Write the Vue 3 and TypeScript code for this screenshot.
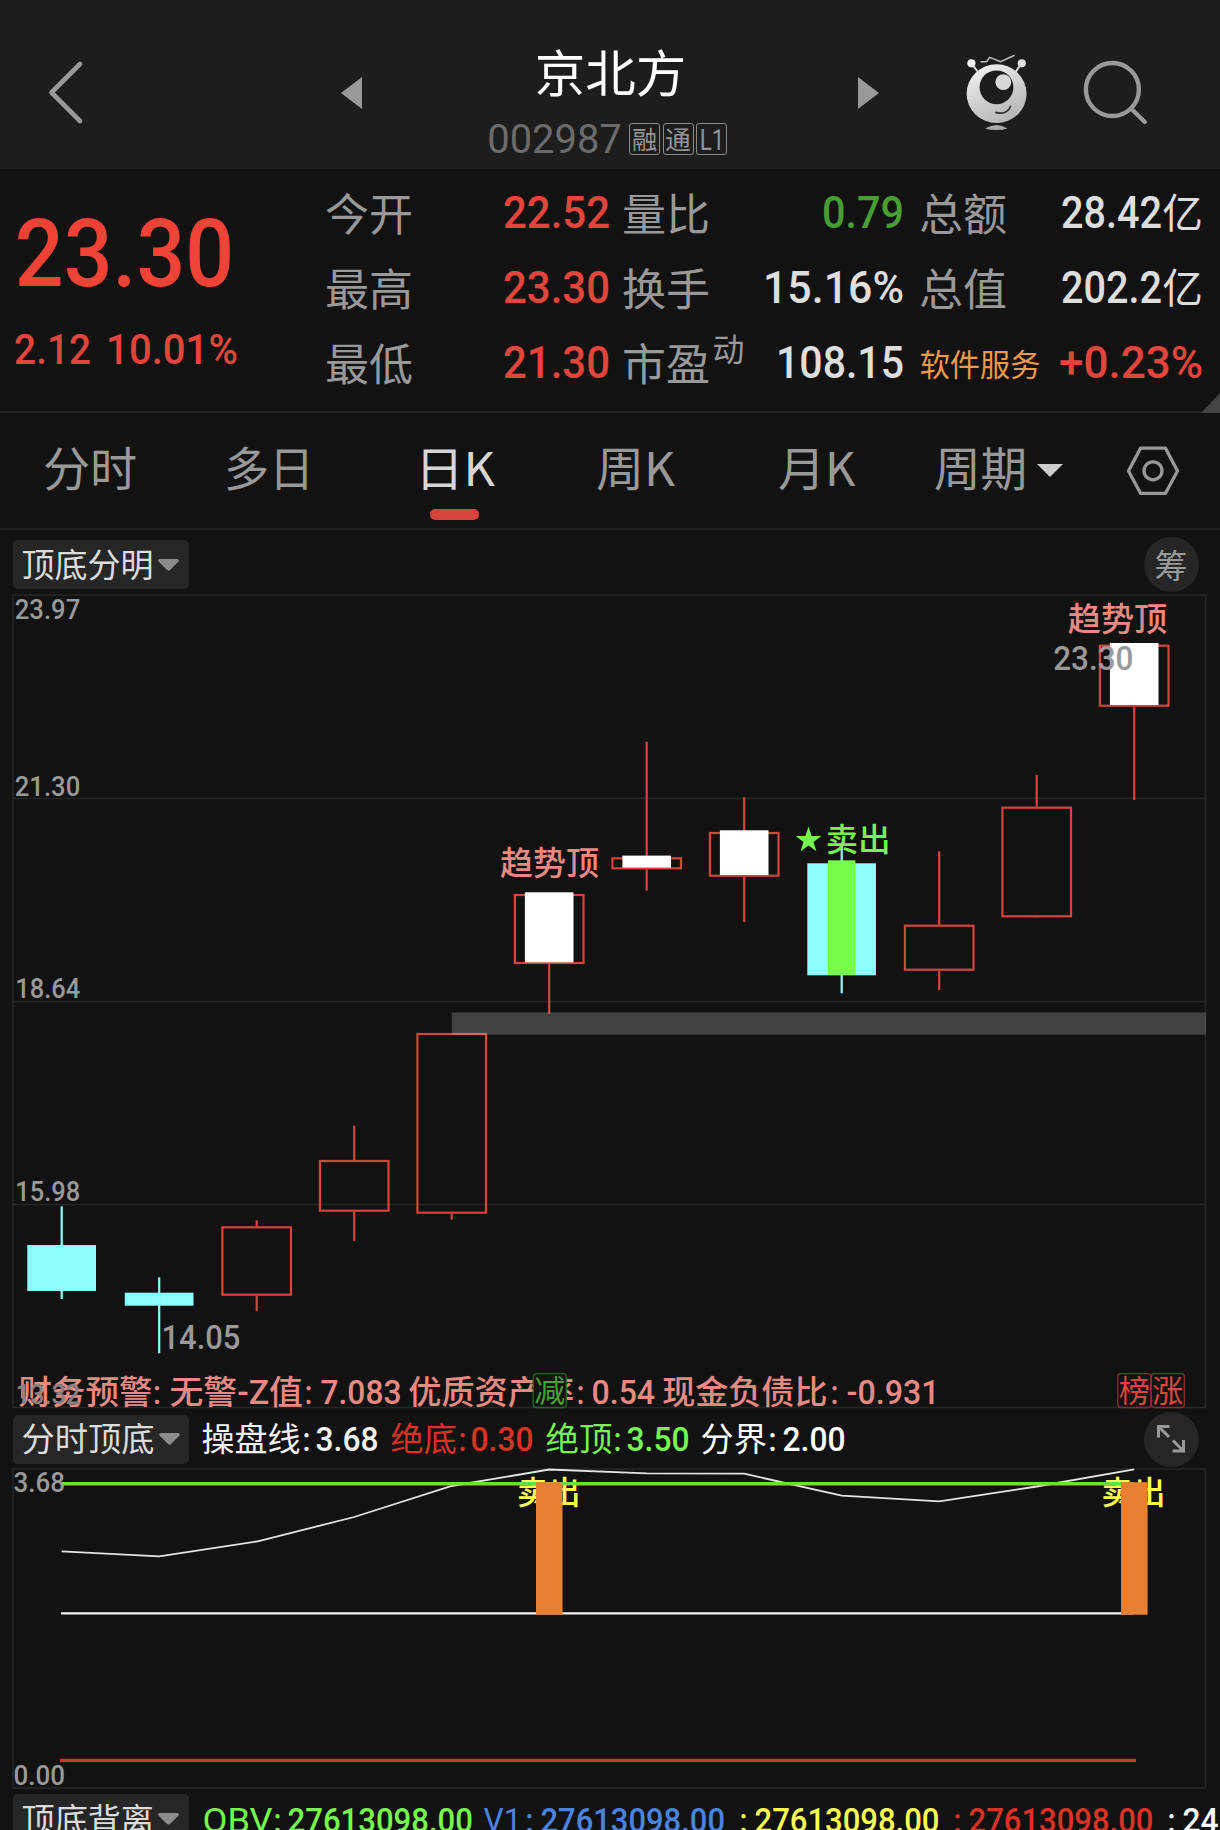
<script setup lang="ts">
import { h } from 'vue'

/* A single line of text fitted to a given ink width; its box is exactly the cap height. */
interface FitProps { t: string; w: number; s: number; dy?: number }
const Fit = (p: FitProps) => {
  const cap = Math.round(p.s * 0.711 * 10) / 10
  const pad = p.s * 0.045
  return h('svg', { class: 'fit', width: p.w, height: cap }, [
    h('text', {
      x: -pad, y: cap + (p.dy ?? 0), 'font-size': p.s,
      textLength: p.w + pad * 2, lengthAdjust: 'spacingAndGlyphs',
    }, p.t),
  ])
}
Fit.props = ['t', 'w', 's', 'dy']

interface Piece { t: string; w: number; c?: string; s?: number; dy?: number; k?: string }
interface Stat { label: Piece; sup?: boolean; value: Piece[] }
const lab = (t: string): Piece => ({ t, w: 84, s: 44, dy: 3 })
const num = (t: string, w: number, c: string): Piece => ({ t, w, c, s: 45 })
const yi: Piece = { t: '亿', w: 37, c: 'light', s: 41, dy: 0, k: 'cjk' }
const stats: Stat[] = [
  { label: lab('今开'), value: [num('22.52', 103, 'red')] },
  { label: lab('量比'), value: [num('0.79', 78, 'green')] },
  { label: lab('总额'), value: [num('28.42', 97, 'light'), yi] },
  { label: lab('最高'), value: [num('23.30', 103, 'red')] },
  { label: lab('换手'), value: [num('15.16%', 137, 'light')] },
  { label: lab('总值'), value: [num('202.2', 97, 'light'), yi] },
  { label: lab('最低'), value: [num('21.30', 103, 'red')] },
  { label: lab('市盈'), sup: true, value: [num('108.15', 124, 'light')] },
  { label: { t: '软件服务', w: 118, s: 30.5, dy: -2, c: 'orange' }, value: [num('+0.23%', 140, 'red')] },
]

const tabs = [
  { t: '分时', w: 90, gap: 45, on: false },
  { t: '多日', w: 86, gap: 90.5, on: false },
  { t: '日K', w: 76, gap: 105, on: true },
  { t: '周K', w: 75, gap: 105, on: false },
  { t: '月K', w: 73.4, gap: 107.6, on: false },
  { t: '周期', w: 89, gap: 82.5, on: false },
]

interface Leg { t: string; w: number; gap: number; c: string; k?: string }
const legend1: Leg[] = [
  { t: '操盘线', w: 96, gap: 14.5, c: '#f2f2f2', k: 'cjk' }, { t: ':', w: 5, gap: 5, c: '#f2f2f2' }, { t: '3.68', w: 60, gap: 7.5, c: '#f2f2f2' },
  { t: '绝底', w: 63.5, gap: 15, c: '#d93326', k: 'cjk' }, { t: ':', w: 5, gap: 5, c: '#d93326' }, { t: '0.30', w: 60, gap: 7, c: '#d93326' },
  { t: '绝顶', w: 64, gap: 14.5, c: '#76f84e', k: 'cjk' }, { t: ':', w: 5, gap: 4.5, c: '#76f84e' }, { t: '3.50', w: 60, gap: 8, c: '#76f84e' },
  { t: '分界', w: 63.5, gap: 14, c: '#fff', k: 'cjk' }, { t: ':', w: 5, gap: 4.5, c: '#fff' }, { t: '2.00', w: 60, gap: 9, c: '#fff' },
]
const legend2: Leg[] = [
  { t: 'OBV', w: 67, gap: 15, c: '#76f84e', k: 'thin' }, { t: ':', w: 5, gap: 4.5, c: '#76f84e' }, { t: '27613098.00', w: 182.5, gap: 8.5, c: '#76f84e' },
  { t: 'V1', w: 35, gap: 14, c: '#4a84e0', k: 'thin' }, { t: ':', w: 5, gap: 7, c: '#4a84e0' }, { t: '27613098.00', w: 181.5, gap: 10, c: '#4a84e0' },
  { t: ':', w: 5, gap: 17.5, c: '#fcfc55' }, { t: '27613098.00', w: 182, gap: 9.5, c: '#fcfc55' },
  { t: ':', w: 5, gap: 17.5, c: '#d93326' }, { t: '27613098.00', w: 182, gap: 9.5, c: '#d93326' },
  { t: ':', w: 5, gap: 17, c: '#fff' }, { t: '24', w: 33, gap: 10, c: '#fff' },
]

/* Candles in page pixels: body top/bottom, wick top/bottom */
type Kind = 'up' | 'mark' | 'down' | 'sell'
const candles: { k: Kind; o: number; c: number; hi: number; lo: number }[] = [
  { k: 'down', o: 1245, c: 1291, hi: 1206.3, lo: 1299 },
  { k: 'down', o: 1292.7, c: 1305.7, hi: 1277.3, lo: 1353.3 },
  { k: 'up', o: 1226.3, c: 1295.7, hi: 1220.3, lo: 1311.3 },
  { k: 'up', o: 1160, c: 1211.7, hi: 1125.7, lo: 1241 },
  { k: 'up', o: 1033, c: 1213.7, hi: 1033, lo: 1219.7 },
  { k: 'mark', o: 894, c: 964, hi: 894, lo: 1013.7 },
  { k: 'mark', o: 857.3, c: 869.3, hi: 741.7, lo: 890.7 },
  { k: 'mark', o: 832, c: 876.7, hi: 797.3, lo: 922 },
  { k: 'sell', o: 863.3, c: 975.3, hi: 842.7, lo: 993.3 },
  { k: 'up', o: 924.7, c: 970.7, hi: 851.3, lo: 990 },
  { k: 'up', o: 806.7, c: 917.3, hi: 775, lo: 917 },
  { k: 'mark', o: 644.7, c: 706.7, hi: 645, lo: 800 },
]
const cx = (i: number) => 61.7 + 97.5 * i

interface Txt { t: string; x: number; e: number; y: number; s: number; c: string }
const P = '#e98984'
const G = '#999'
const axis: Txt[] = [
  { t: '23.97', x: 16, e: 79, y: 618.5, s: 27.5, c: G },
  { t: '21.30', x: 16, e: 79, y: 795.5, s: 27.5, c: G },
  { t: '18.64', x: 16.5, e: 79, y: 998.3, s: 27.5, c: G },
  { t: '15.98', x: 16.5, e: 79, y: 1201, s: 27.5, c: G },
]
const warn: Txt[] = [
  { t: '财务预警', x: 20, e: 151, y: 1404, s: 33, c: P }, { t: ':', x: 154.5, e: 159.5, y: 1404, s: 33, c: P },
  { t: '无警-Z值', x: 171, e: 301.5, y: 1404, s: 33, c: P }, { t: ':', x: 306, e: 311, y: 1404, s: 33, c: P },
  { t: '7.083', x: 322, e: 400, y: 1404.3, s: 33, c: P },
  { t: '优质资产率', x: 409.7, e: 572.6, y: 1404, s: 33, c: P }, { t: ':', x: 578, e: 583, y: 1404, s: 33, c: P },
  { t: '0.54', x: 593, e: 653.6, y: 1404.3, s: 33, c: P },
  { t: '现金负债比', x: 663.7, e: 826, y: 1404, s: 33, c: P }, { t: ':', x: 832, e: 837, y: 1404, s: 33, c: P },
  { t: '-0.931', x: 848, e: 938, y: 1404.3, s: 33, c: P },
]
const notes: Txt[] = [
  { t: '13.32', x: 17, e: 79, y: 1404, s: 27.5, c: '#8d8080' },
  { t: '14.05', x: 163, e: 239, y: 1349, s: 33, c: G },
  { t: '23.30', x: 1054.7, e: 1132, y: 670, s: 33, c: G },
  { t: '趋势顶', x: 501.4, e: 597.5, y: 875, s: 32.5, c: P },
  { t: '趋势顶', x: 1069.3, e: 1165.8, y: 631, s: 32.5, c: P },
  { t: '卖出', x: 827.3, e: 889, y: 851, s: 32, c: '#76f84e' },
]
const line = [1551.3, 1556.3, 1541.5, 1517, 1486, 1469.5, 1473.3, 1473.7, 1495.7, 1501.3, 1486.5, 1469.3]
const points = line.map((y, i) => `${cx(i)},${y}`).join(' ')
const tx = (t: Txt) => t.x - t.s * 0.045
const tl = (t: Txt) => t.e - t.x + t.s * 0.09
</script>

<template>
  <main class="app">
    <header class="top">
      <svg class="back" width="40" height="70" viewBox="46 58 40 70"><path d="M80 64 51.500 92.500 80 121" /></svg>
      <svg class="prev" width="22" height="34" viewBox="0 0 22 34"><path d="M0 16 21 0V32Z" /></svg>
      <div class="title">
        <Fit t="京北方" :w="147" :s="50" class="name" />
        <div class="sub">
          <Fit t="002987" :w="131" :s="40" class="code" />
          <span class="badge"><Fit t="融" :w="23" :s="25" :dy="1.500" /></span>
          <span class="badge"><Fit t="通" :w="23.500" :s="25" :dy="1.500" /></span>
          <span class="badge"><Fit t="L1" :w="22" :s="30" :dy="0.500" class="thin" /></span>
        </div>
      </div>
      <svg class="next" width="22" height="34" viewBox="0 0 22 34"><path d="M21 16 0 0V32Z" /></svg>
      <svg class="robot" width="74" height="84" viewBox="960 50 74 84">
        <defs>
          <linearGradient id="skin" x1="0.2" y1="0" x2="0.7" y2="1">
            <stop offset="0" stop-color="#f2f2f2" /><stop offset="0.6" stop-color="#cacaca" /><stop offset="1" stop-color="#b5b5b5" />
          </linearGradient>
        </defs>
        <path d="M971.500 63.500 978 72M1021.600 63.500 1015.500 72" stroke="#e0e0e0" stroke-width="2" />
        <path d="M980.400 61.800H986.500L989.700 57.300 1000.600 61.700 1014.600 55.300" fill="none" stroke="#bbb" stroke-width="1.500" />
        <circle cx="971.400" cy="63.300" r="4.100" fill="#f4f4f4" />
        <circle cx="1021.800" cy="63.300" r="4.100" fill="#ddd" />
        <ellipse cx="996.600" cy="93.700" rx="30" ry="29.400" fill="url(#skin)" />
        <circle cx="996.500" cy="87.300" r="16.900" fill="#1d1d1d" />
        <circle cx="1003.300" cy="82.200" r="7.900" fill="#d8d8d8" />
        <path d="M996 112.500Q1007 115 1010.500 106.500" fill="none" stroke="#333" stroke-width="1.800" stroke-linecap="round" />
        <path d="M985 128.500Q996.500 121.500 1007.500 128.500 996.500 131.500 985 128.500Z" fill="#aaa" />
      </svg>
      <svg class="search" width="70" height="70" viewBox="1080 58 70 70">
        <circle cx="1112.400" cy="89.500" r="26.500" /><path d="M1131.500 109 1144.800 122" />
      </svg>
    </header>

    <section class="quote">
      <div class="price">
        <Fit t="23.30" :w="211" :s="94" class="last" />
        <div class="chg"><Fit t="2.12" :w="73" :s="42" /><Fit t="10.01%" :w="128" :s="42" /></div>
      </div>
      <div class="grid">
        <div v-for="s in stats" :key="s.label.t" class="stat">
          <div class="label" :class="s.label.c">
            <Fit :t="s.label.t" :w="s.label.w" :s="s.label.s" :dy="s.label.dy" />
            <Fit v-if="s.sup" t="动" :w="29" :s="32" class="sup" />
          </div>
          <div class="value">
            <Fit v-for="v in s.value" :key="v.t" :t="v.t" :w="v.w" :s="v.s" :dy="v.dy" :class="[v.c, v.k]" />
          </div>
        </div>
      </div>
      <svg class="corner" width="19" height="20" viewBox="0 0 19 20"><path d="M19 0V20H0Z" /></svg>
    </section>

    <nav class="tabs">
      <div v-for="t in tabs" :key="t.t" class="tab" :class="{ on: t.on }" :style="{ marginLeft: t.gap + 'px' }">
        <Fit :t="t.t" :w="t.w" :s="47" />
      </div>
      <svg class="caret" width="26" height="13" viewBox="0 0 26 13"><path d="M0 0H26L13 13Z" /></svg>
      <svg class="hex" width="54" height="50" viewBox="0 0 54 50">
        <path d="M14.500 2.200H39.500L51.500 25 39.500 47.300H14.500L2.500 25Z" /><circle cx="27" cy="24.800" r="9" />
      </svg>
    </nav>

    <div class="bar first">
      <button class="pill"><Fit t="顶底分明" :w="129" :s="33" :dy="0.500" /><svg width="21" height="12" viewBox="0 0 21 12"><path d="M1.500 0H19.500Q22 1 20 3L12 11Q10.500 12.500 9 11L1 3Q-1 1 1.500 0Z" /></svg></button>
      <span class="round"><Fit t="筹" :w="30" :s="33" :dy="1" /></span>
    </div>

    <svg class="plot" width="1220" height="816" viewBox="0 594 1220 816">
      <g class="frame">
        <rect x="13" y="595" width="1192.500" height="812.500" />
        <path d="M13 798.500H1205.500M13 1001.500H1205.500M13 1204.500H1205.500" />
      </g>
      <text v-for="t in axis" :key="t.t" :x="tx(t)" :y="t.y" :font-size="t.s" :fill="t.c" :textLength="tl(t)" lengthAdjust="spacingAndGlyphs">{{ t.t }}</text>
      <g v-for="(k, i) in candles" :key="i" :class="k.k">
        <template v-if="k.k === 'down' || k.k === 'sell'">
          <path class="wick" :d="`M${cx(i)} ${k.hi}V${k.lo}`" />
          <rect class="body" :x="cx(i) - 34.400" :y="k.o" width="68.700" :height="k.c - k.o" />
          <rect v-if="k.k === 'sell'" class="core" :x="cx(i) - 13.700" :y="k.o - 3" width="27.400" :height="k.c - k.o + 2.500" />
        </template>
        <template v-else>
          <path class="wick" :d="`M${cx(i)} ${k.hi}V${k.o}M${cx(i)} ${k.c}V${k.lo}`" />
          <rect class="body" :x="cx(i) - 34.300" :y="k.o + 1" width="68.600" :height="k.c - k.o - 2" />
          <rect v-if="k.k === 'mark'" class="core" :x="cx(i) - 24.300" :y="k.o - 1.700" width="48.600" :height="k.c - k.o" />
        </template>
      </g>
      <rect x="451.800" y="1012.300" width="754" height="22.400" fill="#fff" fill-opacity="0.200" />
      <path fill="#76f84e" d="M808.500 826.500 811.600 836H821.300L813.500 842 816.400 851.300 808.500 845.600 800.600 851.300 803.500 842 795.700 836H805.400Z" />
      <text v-for="t in warn" :key="t.x" :x="tx(t)" :y="t.y" :font-size="t.s" :fill="t.c" :textLength="tl(t)" lengthAdjust="spacingAndGlyphs">{{ t.t }}</text>
      <text v-for="t in notes" :key="t.x" :x="tx(t)" :y="t.y" :font-size="t.s" :fill="t.c" :textLength="tl(t)" lengthAdjust="spacingAndGlyphs">{{ t.t }}</text>
      <g class="tag">
        <rect x="533.200" y="1373.700" width="33" height="33.800" rx="3" stroke="#23661c" />
        <text x="534.300" y="1401.500" fill="#46a032">减</text>
        <rect x="1117.800" y="1373.700" width="33" height="33.800" rx="3" stroke="#87302b" />
        <text x="1118.800" y="1401.500" fill="#dc463c">榜</text>
        <rect x="1151.300" y="1373.700" width="33" height="33.800" rx="3" stroke="#87302b" />
        <text x="1152.300" y="1401.500" fill="#dc463c">涨</text>
      </g>
    </svg>

    <div class="bar">
      <button class="pill"><Fit t="分时顶底" :w="130" :s="33" :dy="0.500" /><svg width="21" height="12" viewBox="0 0 21 12"><path d="M1.500 0H19.500Q22 1 20 3L12 11Q10.500 12.500 9 11L1 3Q-1 1 1.500 0Z" /></svg></button>
      <Fit v-for="(l, i) in legend1" :key="i" :t="l.t" :w="l.w" :s="33" :dy="0" :class="l.k" :style="{ marginLeft: l.gap + 'px', fill: l.c }" />
      <span class="round">
        <svg class="expand" width="28" height="28" viewBox="0 0 28 28"><path d="M12.500 1.500H1.500V12.500M1.500 1.500 12 12M15.500 26H26.500V15M26.500 26 16 15.500" /></svg>
      </span>
    </div>

    <svg class="plot" width="1220" height="322" viewBox="0 1468 1220 322">
      <g class="frame"><rect x="13" y="1469" width="1192.500" height="319" /></g>
      <text x="13.500" y="1492.300" font-size="27.500" :fill="G" textLength="51.500" lengthAdjust="spacingAndGlyphs">3.68</text>
      <text x="13.500" y="1784.500" font-size="27.500" :fill="G" textLength="51.500" lengthAdjust="spacingAndGlyphs">0.00</text>
      <g fill="#fcfc55" font-size="32">
        <text x="517" y="1504" textLength="63.500" lengthAdjust="spacingAndGlyphs">卖出</text>
        <text x="1101.500" y="1504" textLength="64" lengthAdjust="spacingAndGlyphs">卖出</text>
      </g>
      <polyline :points="points" fill="none" stroke="#e4e4e4" stroke-width="1.800" />
      <path d="M61 1613.300H1134" stroke="#f4f4f4" stroke-width="2.200" />
      <path d="M62 1483.700H1134" stroke="#69df45" stroke-width="3.400" />
      <path d="M60 1760.300H1136" stroke="#cf3428" stroke-width="3.300" />
      <path d="M536 1482.300H562.500V1614.700H536ZM1121 1482.300H1147.600V1614.700H1121Z" fill="#e97f30" />
    </svg>

    <div class="bar last-bar">
      <button class="pill"><Fit t="顶底背离" :w="129.500" :s="33" :dy="1" /><svg width="21" height="12" viewBox="0 0 21 12"><path d="M1.500 0H19.500Q22 1 20 3L12 11Q10.500 12.500 9 11L1 3Q-1 1 1.500 0Z" /></svg></button>
      <Fit v-for="(l, i) in legend2" :key="i" :t="l.t" :w="l.w" :s="33" :dy="1" :class="l.k" :style="{ marginLeft: l.gap + 'px', fill: l.c }" />
    </div>
  </main>
</template>

<style>
body { margin: 0; background: #121212; }
</style>

<style scoped>
.app {
  width: 1220px;
  height: 1830px;
  overflow: hidden;
  background: #121212;
  font-family: Roboto, "Noto Sans CJK SC", sans-serif;
  font-weight: 500;
}
svg { display: block; flex: none; }
.fit { overflow: visible; fill: currentColor; white-space: pre; }

.top { display: flex; align-items: flex-start; height: 169px; background: #1d1d1d; }
.back { margin: 58px 0 0 46px; fill: none; stroke: #999; stroke-width: 4.600; stroke-linecap: round; stroke-linejoin: round; }
.prev, .next { margin-top: 77px; fill: #999; }
.prev { margin-left: 255px; }
.next { margin-left: 130px; }
.title { display: flex; flex-direction: column; width: 239px; margin: 55.500px 0 0 126px; }
.name { align-self: center; color: #fff; margin-left: 3px; font-weight: 400; }
.sub { display: flex; align-items: flex-start; margin-top: 32px; gap: 2.500px; }
.code { margin: 1.500px 6.500px 0 0; color: #6b6b6b; font-weight: 400; }
.badge {
  display: flex; align-items: center; justify-content: center; box-sizing: border-box;
  width: 31px; height: 32px; flex: none; border: 1px solid #8a8a8a; border-radius: 3px; color: #959595; font-weight: 400;
}
.robot { margin: 50px 0 0 79.500px; }
.search { margin: 58px 0 0 46px; fill: none; stroke: #999; stroke-width: 4.400; stroke-linecap: round; }

.quote { position: relative; display: flex; box-sizing: border-box; height: 244px; border-bottom: 2px solid #232323; }
.price { width: 327px; flex: none; color: #ee4336; }
.last { margin: 49.500px 0 0 19px; }
.chg { display: flex; gap: 19px; margin: 49px 0 0 15.500px; color: #e2453b; }
.grid { display: grid; grid-template-columns: 280.500px 294.500px 298.500px; grid-template-rows: 59px 75px 75px; }
.stat { display: flex; justify-content: space-between; align-items: flex-end; }
.stat:nth-child(3n+2) { padding-left: 16.500px; }
.stat:nth-child(3n) { padding-left: 18.500px; }
.label { display: flex; align-items: flex-end; color: #999; font-weight: 400; }
.sup { margin: 0 0 17px 6px; }
.value { display: flex; align-items: flex-end; gap: 3.500px; }
.red { color: #e2453b; }
.green { color: #479f33; }
.light { color: #dedede; }
.orange { color: #ef9a45; }
.cjk { font-weight: 400; }
.corner { position: absolute; right: 0; bottom: -2px; fill: #444; }

.tabs { display: flex; align-items: flex-start; box-sizing: border-box; height: 117px; border-bottom: 2px solid #202020; color: #999; }
.tab { position: relative; padding-top: 40px; font-family: "Noto Sans CJK SC", sans-serif; font-weight: 400; }
.on { color: #d6d6d6; }
.on::after { content: ""; position: absolute; top: 96px; left: 13px; width: 49px; height: 11px; border-radius: 5px; background: #d6433a; }
.caret { margin: 51px 0 0 12px; fill: #ccc; }
.hex { margin: 33px 0 0 63.500px; fill: none; stroke: #999; stroke-width: 3.300; stroke-linejoin: round; }

.bar { display: flex; align-items: center; height: 58px; padding: 0 21.500px 0 13px; }
.bar.first { height: 64px; }
.first .pill { margin-top: 5px; }
.first .round { margin-top: 5px; }
.pill {
  display: flex; align-items: center; gap: 6px; box-sizing: border-box; width: 175.500px; height: 49px; flex: none;
  padding: 0 0 0 9.500px; border: 0; border-radius: 5px; background: #262626; color: #dcdcdc; font: inherit; font-weight: 400;
}
.pill svg:last-child { fill: #8c8c8c; }
.round {
  display: flex; align-items: center; justify-content: center; width: 55px; height: 55px; flex: none;
  margin-left: auto; border-radius: 50%; background: #262626; color: #999; font-weight: 400;
}
.expand { fill: none; stroke: #999; stroke-width: 3; }
.thin { font-weight: 400; }
.last-bar { height: 57px; padding-right: 0; }

.frame { fill: none; stroke: #262626; stroke-width: 1.600; }
.wick { fill: none; stroke: #d4453b; stroke-width: 2.200; }
.body { fill: none; stroke: #d4453b; stroke-width: 2.200; }
.down .wick, .sell .wick { stroke: #8bfffe; }
.down .body, .sell .body { fill: #8bfffe; stroke: none; }
.mark .core { fill: #fff; }
.sell .core { fill: #76fd4a; }
.plot { font-weight: 500; }
.tag rect { fill: #121212; stroke-width: 1.300; }
.tag text { font-size: 31px; font-weight: 400; }
</style>
